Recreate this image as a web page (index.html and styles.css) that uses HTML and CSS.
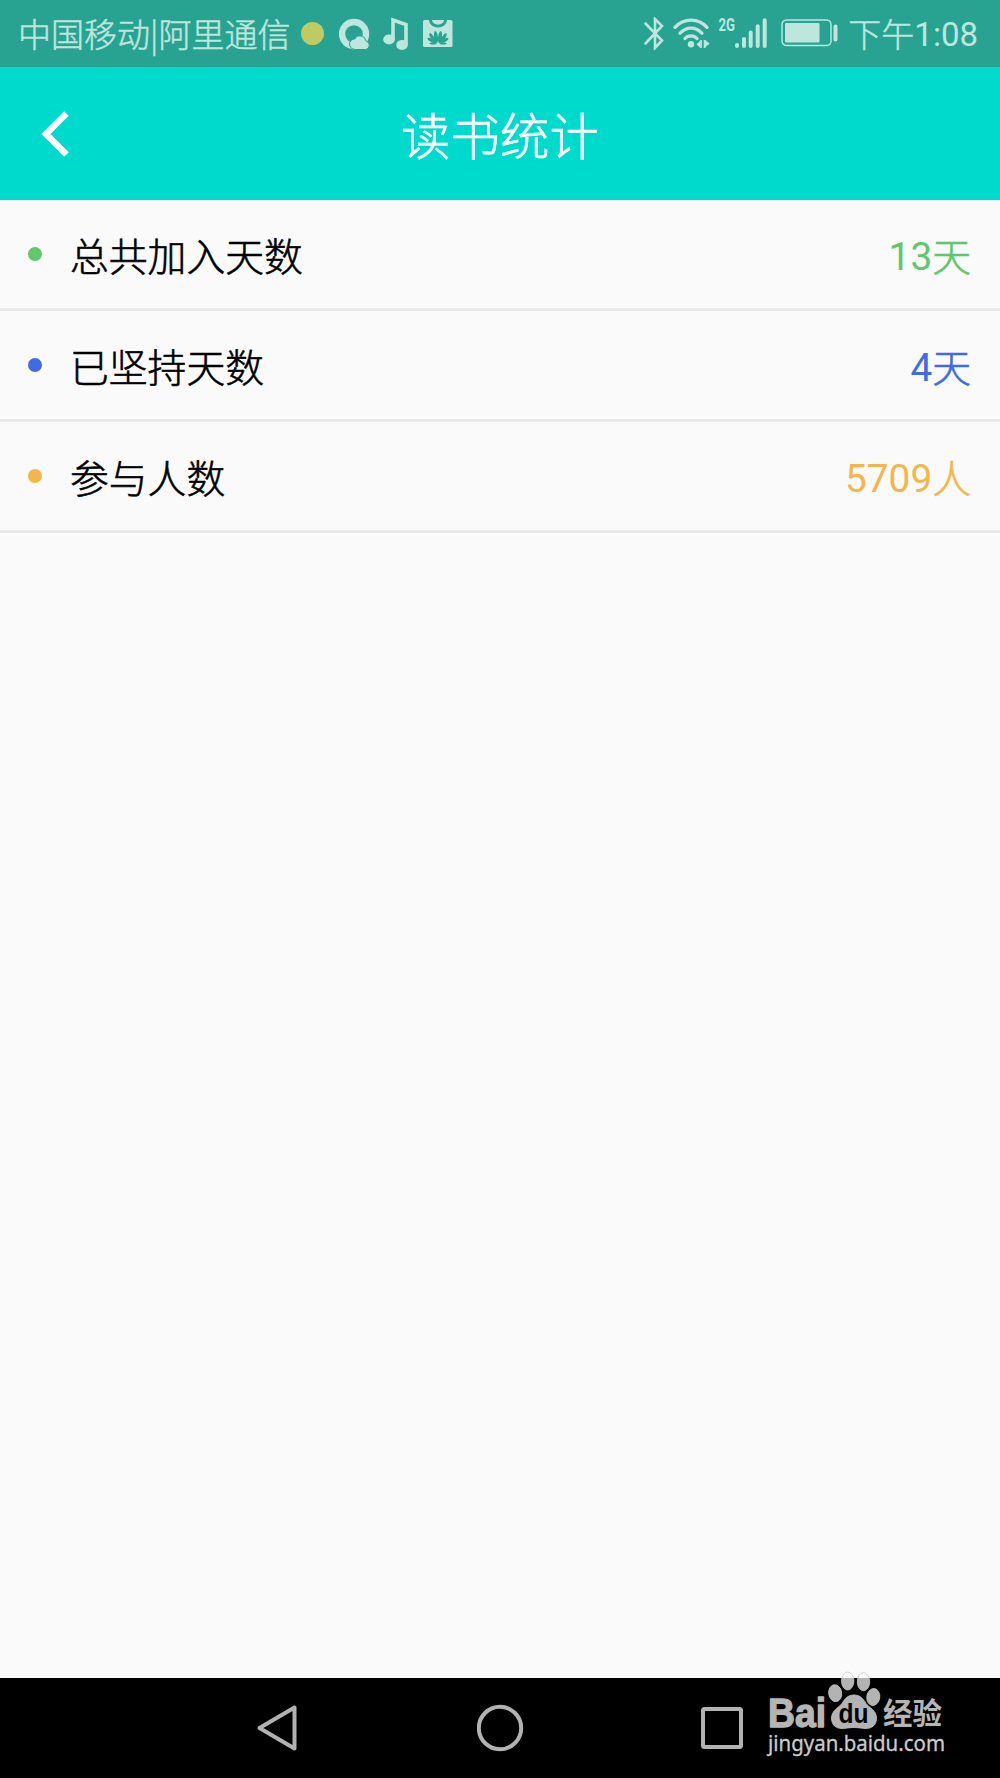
FILE: index.html
```html
<!DOCTYPE html>
<html lang="zh-CN">
<head>
  <meta charset="UTF-8" />
  <meta name="viewport" content="width=device-width, initial-scale=1.0" />
  <title>读书统计</title>
  <link rel="stylesheet" href="styles.css">
</head>
<body>
  <div class="statusBar">
    <div class="statusLeft">
      <span class="carrier">中国移动|阿里通信</span>
      <span class="noticeDot"></span>
      <svg class="iconBrowser" width="31" height="32" viewBox="0 0 31 32">
        <circle cx="15" cy="16" r="12" fill="none" stroke="#bee5de" stroke-width="6.4"/>
        <path d="M16 31.500a5.300 5.300 0 0 1-3.400-9.500 4.500 4.500 0 0 1 3.200-1 6 6 0 0 1 11.200 2 4.400 4.400 0 0 1 0 8.500z" fill="#bee5de" stroke="#29a391" stroke-width="1"/>
      </svg>
      <svg class="iconMusic" width="26" height="33" viewBox="0 0 26 33">
        <ellipse cx="6" cy="22.500" rx="5.800" ry="5" fill="#bee5de"/>
        <ellipse cx="19" cy="28" rx="5.800" ry="5" fill="#bee5de"/>
        <path d="M10 23V3l13 4.600V28" fill="none" stroke="#bee5de" stroke-width="3.600"/>
      </svg>
      <svg class="iconBag" width="30" height="27" viewBox="0 0 30 27">
        <rect width="29.500" height="27" rx="1.500" fill="#bee5de"/>
        <path d="M6 0a9 7.500 0 0 0 18 0" fill="#29a391"/>
        <path d="M9 0a6 4.700 0 0 0 12 0" fill="#bee5de"/>
        <g fill="#29a391">
          <ellipse cx="13" cy="17" rx="1.900" ry="6" transform="rotate(-8 13 17)"/>
          <ellipse cx="17" cy="17" rx="1.900" ry="6" transform="rotate(8 17 17)"/>
          <ellipse cx="9.600" cy="18" rx="1.700" ry="5.500" transform="rotate(-32 9.600 18)"/>
          <ellipse cx="20.400" cy="18" rx="1.700" ry="5.500" transform="rotate(32 20.400 18)"/>
          <ellipse cx="8.500" cy="20.500" rx="1.500" ry="4.500" transform="rotate(-60 8.500 20.500)"/>
          <ellipse cx="21.500" cy="20.500" rx="1.500" ry="4.500" transform="rotate(60 21.500 20.500)"/>
          <ellipse cx="10" cy="23.400" rx="3.500" ry="1"/>
          <ellipse cx="20" cy="23.400" rx="3.500" ry="1"/>
        </g>
      </svg>
    </div>
    <div class="statusRight">
      <svg class="iconBluetooth" width="21" height="33" viewBox="0 0 21 33">
        <path d="M1.500 6.500 18 23.500l-7 7.500V2l7 7L1.500 26.500" fill="none" stroke="#bee5de" stroke-width="2.600" stroke-linecap="round"/>
      </svg>
      <svg class="iconWifi" width="38" height="31" viewBox="0 0 38 31">
        <g fill="none" stroke="#bee5de" stroke-width="3.300" stroke-linecap="round">
          <path d="M2 9.300C10.500-.3 25.500-.3 34 9.300"/>
          <path d="M7 15.300c6-7 16-7 22 0"/>
          <path d="M12 20.500c3.300-3.600 8.700-3.600 12 0"/>
        </g>
        <circle cx="18" cy="26.300" r="3.200" fill="#bee5de"/>
        <path d="M23.500 26.300 27.500 22.500v7.500zM36.700 25.500 32 22v7.500z" fill="#bee5de"/>
        <path d="M28 22v8M31.600 22v8" stroke="#bee5de" stroke-width="1.800"/>
      </svg>
      <svg class="iconSignal" width="49" height="31" viewBox="0 0 49 31">
        <text class="netType" x="-.5" y="13" textLength="16.500" lengthAdjust="spacingAndGlyphs">2G</text>
        <g stroke="#bee5de" stroke-width="4" stroke-linecap="round">
          <path d="M18 27v1M25 21v7M31.700 14.500V28M38.700 8.300V28M45.700 2.300V28"/>
        </g>
      </svg>
      <svg class="iconBattery" width="57" height="28" viewBox="0 0 57 28">
        <rect x="1" y="1" width="49" height="25.500" rx="4.500" fill="none" stroke="#bee5de" stroke-width="1.500"/>
        <rect x="4" y="4" width="34.500" height="19.500" rx="1" fill="#bee5de"/>
        <rect x="52.500" y="5.500" width="4" height="17" rx="2" fill="#bee5de"/>
      </svg>
      <span class="clock"><span class="cjk">下午</span>1:08</span>
    </div>
  </div>

  <header class="titleBar">
    <svg class="backIcon" width="30" height="48" viewBox="0 0 30 48">
      <path d="M25.500 3.500 5 24l20.500 20.500" fill="none" stroke="#fff" stroke-width="6.500"/>
    </svg>
    <h1 class="cjk">读书统计</h1>
  </header>

  <ul class="statList">
    <li class="joined"><i class="dot"></i><span class="label cjk">总共加入天数</span><span class="value">13<span class="cjk">天</span></span></li>
    <li class="kept"><i class="dot"></i><span class="label cjk">已坚持天数</span><span class="value">4<span class="cjk">天</span></span></li>
    <li class="people"><i class="dot"></i><span class="label cjk">参与人数</span><span class="value">5709<span class="cjk">人</span></span></li>
  </ul>

  <nav class="navBar">
    <svg width="48" height="48" viewBox="0 0 48 48"><path d="M4.500 24 39.500 3.500v41z"/></svg>
    <svg width="48" height="48" viewBox="0 0 48 48"><circle cx="23" cy="24" r="21.200"/></svg>
    <svg width="48" height="48" viewBox="0 0 48 48"><rect x="5" y="5" width="38" height="38" rx="1.500"/></svg>

    <!-- 百度经验 -->
    <svg class="watermark" width="184" height="100" viewBox="0 0 184 100">
      <g class="paw">
        <ellipse cx="79.700" cy="22" rx="6.200" ry="9"/>
        <ellipse cx="95.500" cy="22.700" rx="6.200" ry="9"/>
        <ellipse cx="67.200" cy="34.200" rx="6.500" ry="8.500" transform="rotate(-8 67.200 34.200)"/>
        <ellipse cx="105.300" cy="38" rx="6.500" ry="8.500" transform="rotate(8 105.300 38)"/>
        <path d="M86 36c6 0 9 3.500 12 8.500 3 4 10.500 7 10.500 14.500 0 7-4.500 10.500-10.500 10.500-4.500 0-7-1-12-1s-7.500 1-12 1c-6 0-10.500-3.500-10.500-10.500 0-7.500 7.500-10.500 10.500-14.500 3-5 6-8.500 12-8.500z"/>
      </g>
      <text class="bai" x="0" y="68" textLength="58" lengthAdjust="spacingAndGlyphs">Bai</text>
      <text class="du" x="70.500" y="63.500" textLength="30" lengthAdjust="spacingAndGlyphs">du</text>
      <text class="jingyan" x="115" y="65" textLength="59" lengthAdjust="spacingAndGlyphs">经验</text>
      <text class="site" x="0" y="92" textLength="177" lengthAdjust="spacingAndGlyphs">jingyan.baidu.com</text>
    </svg>
  </nav>
</body>
</html>
```
FILE: styles.css
```css
*{box-sizing:border-box;}
body{margin:0;height:1778px;overflow:hidden;font-family:Roboto,"Noto Sans CJK SC",sans-serif;background:#fafafa;color:#000;display:flex;flex-direction:column;}
svg{display:block;flex:none;}
.cjk{font-family:"Noto Sans CJK SC",sans-serif;font-weight:300;-webkit-text-stroke:.6px currentColor;}

.statusBar{height:67px;flex:none;padding:0 22px 0 18px;background:#29a391;color:#bee5de;display:flex;justify-content:space-between;align-items:flex-start;}
.statusLeft,.statusRight{display:flex;align-items:flex-start;}
.carrier,.clock{font-size:33px;line-height:40px;white-space:nowrap;}
.carrier{width:274px;margin-top:13px;font-family:"Noto Sans CJK SC",sans-serif;font-weight:300;-webkit-text-stroke:.5px currentColor;}
.clock{margin-top:15px;}
.clock .cjk{position:relative;top:1px;line-height:1;-webkit-text-stroke-width:.5px;}
.noticeDot{width:23px;height:23px;border-radius:50%;background:#bdca65;margin:22px 0 0 9px;}
.iconBrowser{margin:18px 0 0 15px;}
.iconMusic{margin:17px 0 0 13px;}
.iconBag{margin:20px 0 0 14px;}
.iconBluetooth{margin-top:17px;}
.iconWifi{margin:18px 0 0 8px;}
.iconSignal{margin:18px 0 0 8px;overflow:visible;}
.iconBattery{margin:19px 10px 0 13px;}
.netType{font:700 19px Roboto,sans-serif;fill:#bee5de;}

.titleBar{height:133px;flex:none;background:#00dacc;color:#fff;display:grid;grid-template-columns:100px 1fr 100px;align-items:center;}
.backIcon{margin-left:41px;}
h1{margin:0;font-size:49.5px;line-height:60px;text-align:center;}

.statList{list-style:none;margin:0;padding:0;flex:1;}
li{height:111px;padding:0 29px 0 28px;border-bottom:3px solid #e8e8e8;display:flex;align-items:center;font-size:38.8px;line-height:48px;}
.dot{width:14px;height:14px;border-radius:50%;background:currentColor;}
.label{margin:0 auto 0 28px;color:#000;}
.value{margin-top:5px;}
.value .cjk{position:relative;top:1px;line-height:1;}
.joined{color:#61c66d;}
.kept{color:#416ce1;}
.people{color:#f5b54b;}

.navBar{position:relative;height:100px;flex:none;padding:0 254px 0 255px;background:#000;display:flex;justify-content:space-between;align-items:center;}
.navBar > svg{fill:none;stroke:#b2b2b2;stroke-width:4;stroke-linejoin:round;}
/* the paw sticks out above the bar */
.navBar .watermark{position:absolute;left:768px;top:-19px;overflow:visible;fill:#b5b5b5;stroke:none;}
.paw{fill:#fff;fill-opacity:.7;stroke:#c8c8c8;stroke-width:.8;}
.bai{font:700 41px "Liberation Sans",sans-serif;stroke:#b5b5b5;stroke-width:1.4;}
.du{font:700 27px "Liberation Sans",sans-serif;fill:#000;}
.jingyan{font:700 30px "Noto Sans CJK SC",sans-serif;}
.site{font:400 22px "Noto Sans",sans-serif;fill:#ccc;stroke:#ccc;stroke-width:.3;}
```
